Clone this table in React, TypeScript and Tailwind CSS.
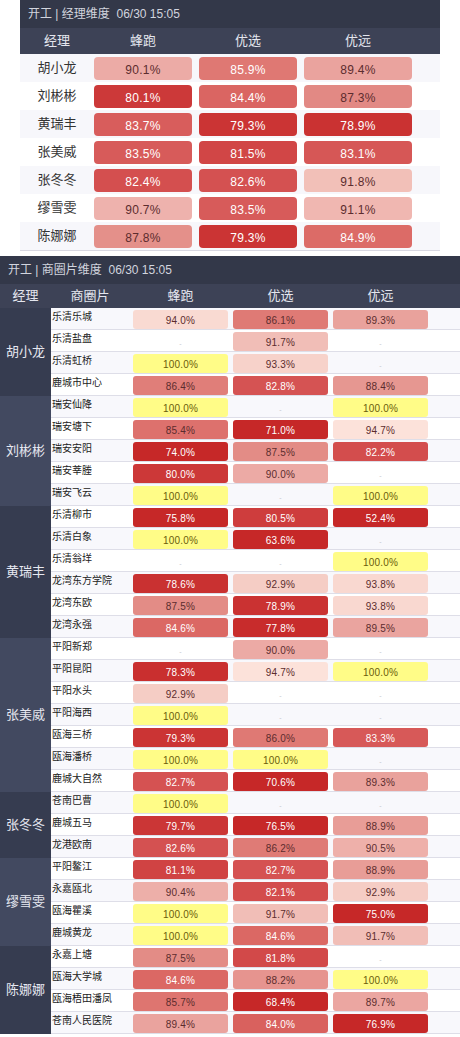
import React from "react";

type Val = number | null;

const font = "font-['Liberation_Sans','Noto_Sans_CJK_SC',sans-serif]";

const managers: [string, Val, Val, Val][] = [
  ["胡小龙", 90.1, 85.9, 89.4],
  ["刘彬彬", 80.1, 84.4, 87.3],
  ["黄瑞丰", 83.7, 79.3, 78.9],
  ["张美威", 83.5, 81.5, 83.1],
  ["张冬冬", 82.4, 82.6, 91.8],
  ["缪雪雯", 90.7, 83.5, 91.1],
  ["陈娜娜", 87.8, 79.3, 84.9],
];

const groups: { name: string; rows: [string, Val, Val, Val][] }[] = [
  {
    name: "胡小龙",
    rows: [
      ["乐清乐城", 94.0, 86.1, 89.3],
      ["乐清盐盘", null, 91.7, null],
      ["乐清虹桥", 100.0, 93.3, null],
      ["鹿城市中心", 86.4, 82.8, 88.4],
    ],
  },
  {
    name: "刘彬彬",
    rows: [
      ["瑞安仙降", 100.0, null, 100.0],
      ["瑞安塘下", 85.4, 71.0, 94.7],
      ["瑞安安阳", 74.0, 87.5, 82.2],
      ["瑞安莘塍", 80.0, 90.0, null],
      ["瑞安飞云", 100.0, null, 100.0],
    ],
  },
  {
    name: "黄瑞丰",
    rows: [
      ["乐清柳市", 75.8, 80.5, 52.4],
      ["乐清白象", 100.0, 63.6, null],
      ["乐清翁垟", null, null, 100.0],
      ["龙湾东方学院", 78.6, 92.9, 93.8],
      ["龙湾东欧", 87.5, 78.9, 93.8],
      ["龙湾永强", 84.6, 77.8, 89.5],
    ],
  },
  {
    name: "张美威",
    rows: [
      ["平阳新郑", null, 90.0, null],
      ["平阳昆阳", 78.3, 94.7, 100.0],
      ["平阳水头", 92.9, null, null],
      ["平阳海西", 100.0, null, null],
      ["瓯海三桥", 79.3, 86.0, 83.3],
      ["瓯海潘桥", 100.0, 100.0, null],
      ["鹿城大自然", 82.7, 70.6, 89.3],
    ],
  },
  {
    name: "张冬冬",
    rows: [
      ["苍南巴曹", 100.0, null, null],
      ["鹿城五马", 79.7, 76.5, 88.9],
      ["龙港欧南", 82.6, 86.2, 90.5],
    ],
  },
  {
    name: "缪雪雯",
    rows: [
      ["平阳鳌江", 81.1, 82.7, 88.9],
      ["永嘉瓯北", 90.4, 82.1, 92.9],
      ["瓯海瞿溪", 100.0, 91.7, 75.0],
      ["鹿城黄龙", 100.0, 84.6, 91.7],
    ],
  },
  {
    name: "陈娜娜",
    rows: [
      ["永嘉上塘", 87.5, 81.8, null],
      ["瓯海大学城", 84.6, 88.2, 100.0],
      ["瓯海梧田潘凤", 85.7, 68.4, 89.7],
      ["苍南人民医院", 89.4, 84.0, 76.9],
    ],
  },
];

// heat scale stops: value -> rgb
const stops: [number, number, number, number][] = [
  [77, 198, 40, 40],
  [80, 204, 56, 56],
  [82.5, 212, 80, 80],
  [85, 220, 108, 104],
  [87.5, 227, 140, 134],
  [90, 236, 170, 165],
  [92.5, 244, 200, 192],
  [95, 253, 230, 222],
];

const heat = (v: number) => {
  if (v >= 100) return "#fffc87";
  if (v <= stops[0][0]) return `rgb(${stops[0][1]},${stops[0][2]},${stops[0][3]})`;
  for (let i = 1; i < stops.length; i++) {
    const a = stops[i - 1];
    const b = stops[i];
    if (v <= b[0]) {
      const t = (v - a[0]) / (b[0] - a[0]);
      const c = [1, 2, 3].map((k) => Math.round(a[k] + (b[k] - a[k]) * t));
      return `rgb(${c[0]},${c[1]},${c[2]})`;
    }
  }
  const l = stops[stops.length - 1];
  return `rgb(${l[1]},${l[2]},${l[3]})`;
};

const textColor = (v: number, limit: number) => {
  if (v >= 100) return "#6b5c0c";
  return v < limit ? "#ffffff" : "#5c2c2e";
};

const BigCell = ({ v, w, first }: { v: number; w: string; first?: boolean }) => (
  <div
    className={`${w} ${first ? "" : "ml-[7px]"} mt-[3px] h-[23px] rounded-[4px] flex items-center justify-center pt-[3px] text-[12px] tracking-[0.3px]`}
    style={{ backgroundColor: heat(v), color: textColor(v, 86) }}
  >
    {v.toFixed(1)}%
  </div>
);

const SmallCell = ({ v, first }: { v: Val; first?: boolean }) => {
  if (v === null)
    return (
      <div className={`w-[95px] ${first ? "" : "ml-[5px]"} mt-[2px] h-[19px] flex items-center justify-center pt-[6px] text-[7px] text-[#c4c4cc]`}>
        -
      </div>
    );
  return (
    <div
      className={`w-[95px] ${first ? "" : "ml-[5px]"} mt-[2px] h-[19px] rounded-[3px] flex items-center justify-center pt-[2px] text-[10px] tracking-[0.2px]`}
      style={{ backgroundColor: heat(v), color: textColor(v, 85.2) }}
    >
      {v.toFixed(1)}%
    </div>
  );
};

export default function App() {
  let idx = 0;
  return (
    <div className={`w-[460px] bg-white ${font}`}>
      {/* 经理维度 */}
      <section className="mx-[20px] border-b border-[#d8d8e2]">
        <div className="h-[28px] bg-[#333849] flex items-center pl-[8px] text-[12px] text-[#d2d5de] whitespace-pre">
          开工 | 经理维度  06/30 15:05
        </div>
        <div className="h-[26px] bg-[#3d4256] flex items-center text-[13px] text-[#e4e6ee]">
          <div className="w-[74px] text-center">经理</div>
          <div className="w-[98px] text-center">蜂跑</div>
          <div className="w-[98px] ml-[7px] text-center">优选</div>
          <div className="w-[108px] ml-[7px] text-center">优远</div>
        </div>
        {managers.map((m, i) => (
          <div key={m[0]} className={`h-[28px] flex ${i % 2 === 0 ? "bg-[#f7f7fb]" : "bg-white"}`}>
            <div className="w-[74px] flex items-center justify-center text-[13px] text-[#333]">{m[0]}</div>
            <BigCell v={m[1] as number} w="w-[98px]" first />
            <BigCell v={m[2] as number} w="w-[98px]" />
            <BigCell v={m[3] as number} w="w-[108px]" />
          </div>
        ))}
      </section>

      {/* 商圈片维度 */}
      <section className="mt-[5px]">
        <div className="h-[28px] bg-[#333849] flex items-center pl-[8px] text-[12px] text-[#d2d5de] whitespace-pre">
          开工 | 商圈片维度  06/30 15:05
        </div>
        <div className="h-[24px] bg-[#3d4256] flex items-center text-[13px] text-[#e4e6ee]">
          <div className="w-[51px] text-center">经理</div>
          <div className="w-[78px] text-center">商圈片</div>
          <div className="w-[95px] ml-[4px] text-center">蜂跑</div>
          <div className="w-[95px] ml-[5px] text-center">优选</div>
          <div className="w-[95px] ml-[5px] text-center">优远</div>
        </div>
        {groups.map((g, gi) => (
          <div key={g.name} className="flex">
            <div
              className={`w-[51px] flex items-center justify-center text-[13px] text-[#e6e8f0] ${gi % 2 === 0 ? "bg-[#363c50]" : "bg-[#424960]"}`}
            >
              {g.name}
            </div>
            <div className="flex-1">
              {g.rows.map((r) => {
                const even = idx++ % 2 === 0;
                return (
                  <div
                    key={r[0]}
                    className={`h-[22px] flex border-b border-[#dedee8] ${even ? "bg-[#f8f8fc]" : "bg-white"}`}
                  >
                    <div className="w-[82px] pl-[1px] pb-[4px] flex items-center text-[10px] text-[#222] whitespace-nowrap">
                      {r[0]}
                    </div>
                    <SmallCell v={r[1]} first />
                    <SmallCell v={r[2]} />
                    <SmallCell v={r[3]} />
                  </div>
                );
              })}
            </div>
          </div>
        ))}
      </section>
    </div>
  );
}
